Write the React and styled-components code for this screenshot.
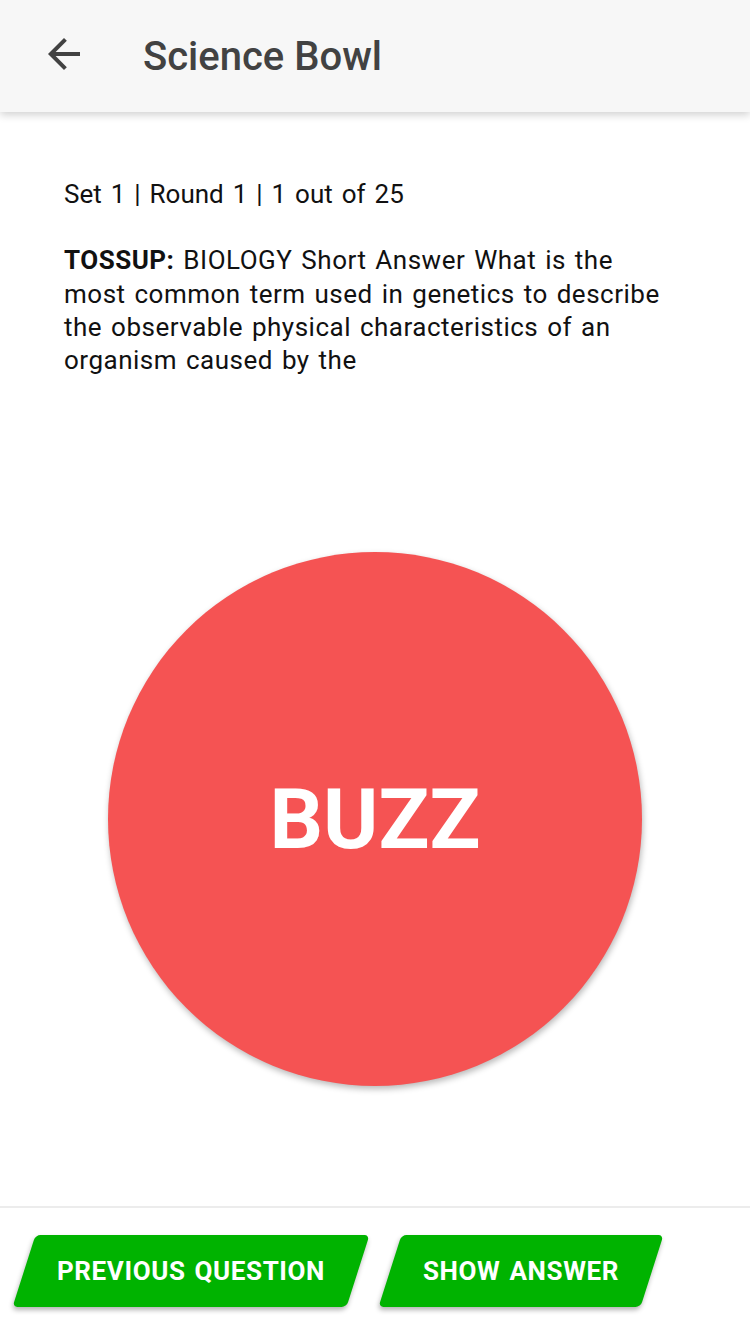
import React from 'react';
import styled, { createGlobalStyle } from 'styled-components';

const GlobalStyle = createGlobalStyle`
    html, body {
        margin: 0;
        padding: 0;
        background: #ffffff;
    }
    body {
        font-family: Roboto, "Noto Sans", "Liberation Sans", sans-serif;
    }
`;

const Screen = styled.div`
    display: flex;
    flex-direction: column;
    height: 1334px;
    width: 750px;
    overflow: hidden;
    background: #ffffff;
`;

const Header = styled.header`
    height: 112px;
    flex-shrink: 0;
    display: flex;
    align-items: center;
    padding-left: 40px;
    background-color: #f7f7f7;
    box-shadow: 0 3px 8px rgba(0, 0, 0, 0.18);
    position: relative;
    z-index: 1;
`;

const BackButton = styled.button`
    width: 48px;
    height: 48px;
    padding: 0;
    margin: -4px 55px 0 0;
    border: none;
    background: none;
    display: flex;
    align-items: center;
    justify-content: center;
    color: #424242;
`;

const Title = styled.h1`
    margin: 0;
    font-size: 40px;
    font-weight: 500;
    color: #424242;
`;

const Main = styled.main`
    flex: 1;
    display: flex;
    flex-direction: column;
    padding: 66px 78px 0 64px;
`;

const Meta = styled.p`
    margin: 0;
    font-size: 26px;
    line-height: 33.3px;
    word-spacing: 2.5px;
    color: #111111;
`;

const Question = styled.p`
    margin: 33px 0 0 0;
    font-size: 26px;
    line-height: 33.3px;
    letter-spacing: 0.5px;
    word-spacing: 2px;
    color: #111111;

    strong {
        font-weight: 700;
    }
`;

const BuzzButton = styled.button`
    width: 534px;
    height: 534px;
    flex-shrink: 0;
    margin: 175px 0 0 44px;
    border: none;
    border-radius: 50%;
    background-color: #f55353;
    box-shadow: 1px 3px 6px rgba(0, 0, 0, 0.28);
    display: flex;
    align-items: center;
    justify-content: center;
    padding: 0;
    color: #ffffff;
    font-family: Roboto, "Liberation Sans", sans-serif;
    font-size: 84px;
    font-weight: 700;
`;

const BottomBar = styled.footer`
    height: 128px;
    flex-shrink: 0;
    box-sizing: border-box;
    border-top: 2px solid #ececec;
    display: flex;
    align-items: center;
    gap: 32px;
    padding: 0 24px;
`;

const SlantButton = styled.button`
    height: 72px;
    width: ${props => props.w}px;
    border: none;
    border-radius: 5px;
    padding: 0;
    background-color: #00b300;
    transform: skewX(-17.7deg);
    box-shadow: 0 3px 5px rgba(0, 0, 0, 0.3);
    display: flex;
    align-items: center;
    justify-content: center;
`;

const SlantLabel = styled.span`
    display: block;
    transform: skewX(17.7deg);
    color: #ffffff;
    font-family: Roboto, "Liberation Sans", sans-serif;
    font-size: 26px;
    font-weight: 700;
    letter-spacing: 0.6px;
    word-spacing: 2px;
    text-transform: uppercase;
`;

const BackArrow = () => (
    <svg width="48" height="48" viewBox="0 0 24 24" fill="currentColor">
        <path d="M20 11H7.83l5.59-5.59L12 4l-8 8 8 8 1.41-1.41L7.83 13H20v-2z" />
    </svg>
);

const App = () => {
    return (
        <Screen>
            <GlobalStyle />
            <Header>
                <BackButton aria-label="Back">
                    <BackArrow />
                </BackButton>
                <Title>Science Bowl</Title>
            </Header>
            <Main>
                <Meta>Set 1 | Round 1 | 1 out of 25</Meta>
                <Question>
                    <strong>TOSSUP:</strong> BIOLOGY Short Answer What is the most common term used in genetics to describe the observable physical characteristics of an organism caused by the
                </Question>
                <BuzzButton>BUZZ</BuzzButton>
            </Main>
            <BottomBar>
                <SlantButton w={334}>
                    <SlantLabel>Previous Question</SlantLabel>
                </SlantButton>
                <SlantButton w={262}>
                    <SlantLabel>Show Answer</SlantLabel>
                </SlantButton>
            </BottomBar>
        </Screen>
    );
};

export default App;
